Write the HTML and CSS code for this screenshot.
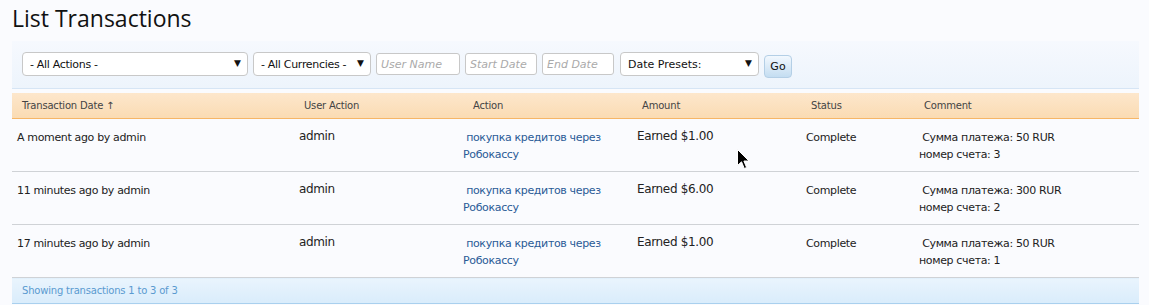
FILE: index.html
```html
<!DOCTYPE html>
<html lang="en">
    <head>
        <meta charset="UTF-8"/>
        <title>List Transactions</title>
        <link rel="stylesheet" href="styles.css">
    </head>
    <body>
        <h1>List Transactions</h1>
        <form class="filters" action="javascript:;">
            <span class="pick pick-actions"><select><option>- All Actions -</option></select></span>
            <span class="pick pick-currencies"><select><option>- All Currencies -</option></select></span>
            <input type="text" class="field field-user" placeholder="User Name">
            <input type="text" class="field field-date" placeholder="Start Date">
            <input type="text" class="field field-date" placeholder="End Date">
            <span class="pick pick-presets"><select><option>Date Presets:</option></select></span>
            <button type="submit" class="go">Go</button>
        </form>
        <table class="transactions">
            <thead>
                <tr>
                    <th class="col-date">Transaction Date &uarr;</th>
                    <th class="col-user">User Action</th>
                    <th class="col-action">Action</th>
                    <th class="col-amount">Amount</th>
                    <th class="col-status">Status</th>
                    <th class="col-comment">Comment</th>
                </tr>
            </thead>
            <tbody>
                <tr>
                    <td>A moment ago by admin</td>
                    <td class="user">admin</td>
                    <td><a href="#">&nbsp;покупка кредитов через Робокассу</a></td>
                    <td class="amount">Earned $1.00</td>
                    <td>Complete</td>
                    <td>&nbsp;Сумма платежа: 50 RUR<br>номер счета: 3</td>
                </tr>
                <tr>
                    <td>11 minutes ago by admin</td>
                    <td class="user">admin</td>
                    <td><a href="#">&nbsp;покупка кредитов через Робокассу</a></td>
                    <td class="amount">Earned $6.00</td>
                    <td>Complete</td>
                    <td>&nbsp;Сумма платежа: 300 RUR<br>номер счета: 2</td>
                </tr>
                <tr>
                    <td>17 minutes ago by admin</td>
                    <td class="user">admin</td>
                    <td><a href="#">&nbsp;покупка кредитов через Робокассу</a></td>
                    <td class="amount">Earned $1.00</td>
                    <td>Complete</td>
                    <td>&nbsp;Сумма платежа: 50 RUR<br>номер счета: 1</td>
                </tr>
            </tbody>
            <tfoot>
                <tr>
                    <td colspan="6">Showing transactions 1 to 3 of 3</td>
                </tr>
            </tfoot>
        </table>
        <svg class="cursor" width="13" height="21" viewBox="0 0 13 21">
            <path d="M0.5 0.5 L0.5 16.5 L4.5 12.8 L7.3 19.5 L9.6 18.5 L6.9 12 L12 12 Z" fill="#000" stroke="#fff" stroke-width="1"/>
        </svg>
    </body>
</html>
```

FILE: styles.css
```css
body {
  margin: 0;
  padding: 0 10px 0 12px;
  background: #fafbfe;
  font-family: "DejaVu Sans", Verdana, sans-serif;
  font-size: 11px;
  color: #222;
  position: relative;
}

h1 {
  margin: 0;
  padding: 4px 0 9px 0;
  font-family: "Open Sans", sans-serif;
  font-weight: normal;
  font-size: 23px;
  line-height: 28px;
  color: #111;
}

.filters {
  display: flex;
  align-items: center;
  gap: 5px;
  height: 47px;
  padding: 0 10px;
  background: linear-gradient(#f6f9fe, #edf4fc);
  border-bottom: 1px solid #d6e5f5;
  margin-bottom: 4px;
}

.pick {
  position: relative;
  display: inline-block;
  margin-top: -1px;
}
.pick::after {
  content: '\25BC';
  position: absolute;
  right: 7px;
  top: 6px;
  font-size: 9px;
  color: #111;
  pointer-events: none;
}
.pick select {
  appearance: none;
  -webkit-appearance: none;
  height: 24px;
  width: 100%;
  padding: 0 20px 0 7px;
  background: #fff;
  border: 1px solid #c8c8c8;
  border-radius: 4px;
  font-family: "DejaVu Sans", sans-serif;
  font-size: 11px;
  letter-spacing: -0.3px;
  color: #111;
}
.pick-actions { width: 226px; }
.pick-currencies { width: 118px; }
.pick-presets { width: 139px; margin-left: 1px; }
.pick-presets select { letter-spacing: 0; }

.field {
  height: 22px;
  box-sizing: border-box;
  padding: 0 4px;
  border: 1px solid #c8c8c8;
  border-radius: 3px;
  background: #fff;
  font-family: "DejaVu Sans", sans-serif;
  font-size: 11px;
  margin-top: -1px;
}
.field::placeholder {
  color: #aaa;
  font-style: italic;
}
.field-user { width: 84px; }
.field-date { width: 72px; }

.go {
  height: 23px;
  width: 28px;
  margin-top: 4px;
  padding: 0;
  border: 1px solid #b4cfe6;
  border-radius: 4px;
  background: linear-gradient(#f2f8fe, #c4ddf1);
  font-family: "DejaVu Sans", sans-serif;
  font-size: 11px;
  color: #111;
}

.transactions {
  width: 100%;
  border-collapse: collapse;
  table-layout: fixed;
}

.transactions th {
  height: 25px;
  padding: 0 0 0 10px;
  text-align: left;
  font-weight: normal;
  font-size: 10px;
  letter-spacing: -0.2px;
  color: #444;
  background: linear-gradient(#fde7cc, #fadbb3);
  border-bottom: 1px solid #f6b667;
}

.transactions th.col-action { padding-left: 15px; }

.col-date { width: 272px; }
.col-user { width: 154px; }
.col-action { width: 159px; }
.col-amount { width: 159px; }
.col-status { width: 103px; }

.transactions tbody td {
  height: 53px;
  vertical-align: top;
  padding: 10px 0 0 5px;
  box-sizing: border-box;
  line-height: 17px;
  letter-spacing: -0.35px;
  border-bottom: 1px solid #cfd2d6;
}

.transactions td.user,
.transactions td.amount {
  font-size: 12px;
  line-height: 16px;
  padding-top: 9px;
}

.transactions a {
  color: #295a96;
  text-decoration: none;
}

.transactions tfoot td {
  height: 25px;
  padding: 0 0 0 10px;
  font-size: 10px;
  letter-spacing: -0.2px;
  color: #5a9ad0;
  background: linear-gradient(#e9f4fd, #d9ecfb);
  border-bottom: 1px solid #a9d0ee;
}

.cursor {
  position: absolute;
  left: 737px;
  top: 149px;
}
```
